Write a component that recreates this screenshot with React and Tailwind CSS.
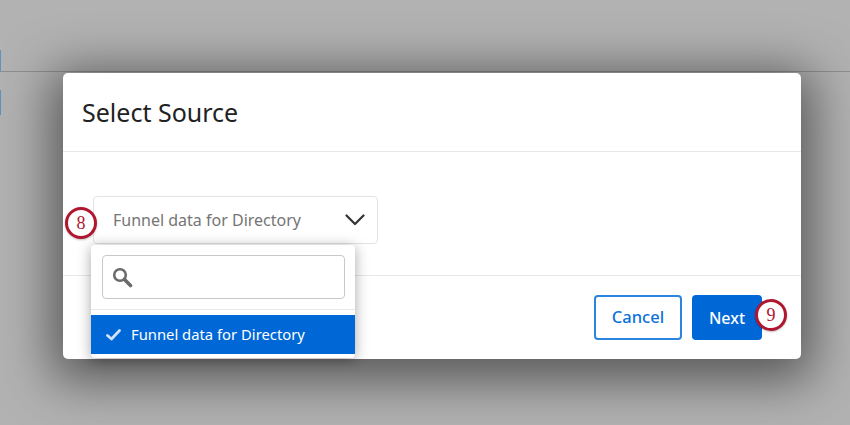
import React from 'react';

const Badge = ({ n, className }) => (
  <div className={`absolute w-[32px] h-[32px] rounded-full bg-white border-[3px] border-[#b0162f] flex items-center justify-center text-[18px] text-[#b0162f] font-['Liberation_Serif',serif] shadow-[0_1px_2px_rgba(0,0,0,0.25)] ${className}`}>
    {n}
  </div>
);

const App = () => {
  return (
    <div className="relative w-[850px] h-[425px] overflow-hidden bg-[#b2b2b2] font-['Noto_Sans',sans-serif]">
      {/* Page behind the overlay */}
      <div className="h-[72px] border-b border-[#8f8f8f] flex items-end">
        <div className="w-px h-[21px] bg-[#5f93c0]"></div>
      </div>
      <div className="w-px h-[25px] mt-[18px] bg-[#5f93c0]"></div>

      {/* Modal */}
      <div className="absolute left-[63px] top-[73px] w-[738px] h-[286px] bg-white rounded-[5px] shadow-[0_10px_50px_12px_rgba(0,0,0,0.5)]">
        <div className="h-[79px] border-b border-[#e8e8e8] pl-[19px] pt-[21px]">
          <h1 className="text-[25px] leading-[36px] text-[#222]">Select Source</h1>
        </div>
        <div className="h-[124px] border-b border-[#e8e8e8] pl-[30px] pt-[44px]">
          <div className="w-[285px] h-[48px] border border-[#e3e3e3] rounded-[4px] flex items-center justify-between pl-[19px] pr-[12px] text-[16px] text-[#757575]">
            <span>Funnel data for Directory</span>
            <svg width="20" height="12" viewBox="0 0 20 12" fill="none" stroke="#333" strokeWidth="2.2" strokeLinecap="round" strokeLinejoin="round">
              <path d="M1.5 1.5 L10 10 L18.5 1.5" />
            </svg>
          </div>
        </div>
        <div className="flex justify-end gap-[10px] pt-[19px] pr-[39px]">
          <button className="w-[88px] h-[45px] rounded-[4px] border-2 border-[#2a84e0] bg-white text-[#0b72d9] text-[16.5px] font-medium">Cancel</button>
          <button className="w-[70px] h-[45px] rounded-[4px] bg-[#0067d6] text-white text-[16px] font-medium">Next</button>
        </div>

        {/* Open dropdown */}
        <div className="absolute left-[28px] top-[172px] w-[264px] h-[113px] bg-white rounded-[4px] shadow-[0_2px_14px_rgba(0,0,0,0.35)]">
          <div className="h-[65px] border-b border-[#e8e8e8] pt-[10px] pl-[11px] pr-[10px]">
            <div className="h-[44px] border-[1.5px] border-[#c8c8c8] rounded-[4px] flex items-center pl-[9px]">
              <svg width="21" height="21" viewBox="0 0 21 21" fill="none" stroke="#6b6b6b" strokeLinecap="round">
                <circle cx="8" cy="8" r="5.8" strokeWidth="2.6" />
                <path d="M12.5 12.5 L18.5 18.5" strokeWidth="3.6" />
              </svg>
            </div>
          </div>
          <div className="mt-[5px] h-[39px] bg-[#0067d6] flex items-center pl-[15px] gap-[10px] text-white text-[14.8px]">
            <svg width="15" height="12" viewBox="0 0 15 12" fill="none" stroke="#cfe2f6" strokeWidth="2.8" strokeLinecap="round" strokeLinejoin="round">
              <path d="M1.5 6.5 L5.5 10 L13.5 1.5" />
            </svg>
            <span>Funnel data for Directory</span>
          </div>
        </div>

        <Badge n="8" className="left-[2px] top-[134px]" />
        <Badge n="9" className="left-[692px] top-[226px]" />
      </div>
    </div>
  );
};

export default App;
